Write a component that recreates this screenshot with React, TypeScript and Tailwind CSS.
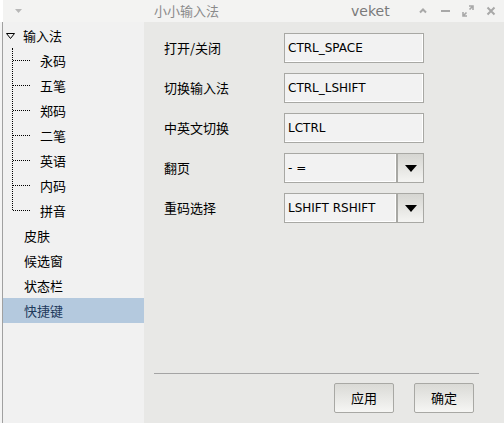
const cjk = { fontFamily: '"Noto Sans CJK SC", "DejaVu Sans", sans-serif' };

type Node = { label: string; child?: boolean; selected?: boolean };

const tree: Node[] = [
  { label: '输入法' },
  { label: '永码', child: true },
  { label: '五笔', child: true },
  { label: '郑码', child: true },
  { label: '二笔', child: true },
  { label: '英语', child: true },
  { label: '内码', child: true },
  { label: '拼音', child: true },
  { label: '皮肤' },
  { label: '候选窗' },
  { label: '状态栏' },
  { label: '快捷键', selected: true },
];

function TextBox({ value }: { value: string }) {
  return (
    <div className="w-[140px] h-[30px] border border-[#a8a8a4] bg-[#f2f2f2] shadow-[inset_-1px_-1px_0_#ffffff] flex items-center pl-[3px] text-[12px] text-black font-['DejaVu_Sans']">
      {value}
    </div>
  );
}

function Combo({ value }: { value: string }) {
  return (
    <div className="flex w-[140px] h-[30px]">
      <div className="w-[113px] h-full border border-[#a8a8a4] bg-[#f2f2f2] shadow-[inset_-1px_-1px_0_#ffffff] flex items-center pl-[3px] text-[12px] text-black font-['DejaVu_Sans']">
        {value}
      </div>
      <div className="w-[27px] h-full border border-[#a8a8a4] bg-gradient-to-b from-[#d6d6d2] to-[#f4f4f2] flex items-center justify-center">
        <svg width="12" height="7" viewBox="0 0 12 7">
          <polygon points="0,0 12,0 6,7" fill="#000" />
        </svg>
      </div>
    </div>
  );
}

function Btn({ label }: { label: string }) {
  return (
    <button
      className="w-[60px] h-[30px] border border-[#a8a8a4] rounded-[2px] bg-gradient-to-b from-[#dadad6] to-[#f6f6f4] text-[13px] text-black"
      style={cjk}
    >
      {label}
    </button>
  );
}

export default function App() {
  const fields = [
    { label: '打开/关闭', value: 'CTRL_SPACE' },
    { label: '切换输入法', value: 'CTRL_LSHIFT' },
    { label: '中英文切换', value: 'LCTRL' },
  ];
  const combos = [
    { label: '翻页', value: '- =' },
    { label: '重码选择', value: 'LSHIFT RSHIFT' },
  ];

  return (
    <div className="w-[504px] h-[423px] flex bg-[#e8e8e6] overflow-hidden" style={cjk}>
      {/* desktop strip on the left edge */}
      <div className="w-[3px] h-full flex flex-col">
        <div className="h-[22px] bg-white" />
        <div className="flex-1 bg-[#f4f4f4] border-r border-[#a0a0a0]" />
      </div>

      <div className="flex-1 flex flex-col">
        {/* title bar */}
        <div className="h-[22px] flex items-center bg-[#f3f3f2] text-[#8a8a8a] relative">
          <svg className="ml-[12px]" width="7" height="4" viewBox="0 0 7 4">
            <polygon points="0,0 7,0 3.5,4" fill="#b8b8b8" />
          </svg>
          <span className="ml-[132px] text-[13px]">小小输入法</span>
          <span className="ml-[132px] text-[14px] font-['DejaVu_Sans'] text-[#7a7a7a]">veket</span>
          <div className="ml-auto mr-[8px] flex items-center gap-[12px]">
            <svg width="10" height="10" viewBox="0 0 10 10">
              <path d="M2 6.5 L5 3.5 L8 6.5" stroke="#a8a8a8" strokeWidth="2" fill="none" />
            </svg>
            <svg width="10" height="10" viewBox="0 0 10 10">
              <rect x="1" y="4" width="9" height="2" fill="#a8a8a8" />
            </svg>
            <svg width="12" height="12" viewBox="0 0 12 12">
              <path d="M7 1 H11 V5 M11 1 L7.5 4.5 M5 11 H1 V7 M1 11 L4.5 7.5" stroke="#a8a8a8" strokeWidth="1.6" fill="none" />
            </svg>
            <svg width="10" height="10" viewBox="0 0 10 10">
              <path d="M1.5 1.5 L8.5 8.5 M8.5 1.5 L1.5 8.5" stroke="#a8a8a8" strokeWidth="2" />
            </svg>
          </div>
        </div>

        <div className="flex-1 flex">
          {/* tree sidebar */}
          <div className="w-[141px] h-full bg-[#f1f1f1] pt-[1px] relative">
            <div className="absolute left-[9px] top-[26px] h-[162px] border-l border-dotted border-[#000]" />
            {tree.map((n, i) => (
              <div
                key={n.label}
                className={`h-[25px] flex items-center text-[13px] ${n.selected ? 'bg-[#b4c9de] text-[#1e3a5c]' : 'text-black'}`}
              >
                {i === 0 && (
                  <svg className="ml-[3px] mr-[8px]" width="9" height="6" viewBox="0 0 9 6">
                    <polygon points="0.5,0.5 8.5,0.5 4.5,5.5" fill="none" stroke="#000" />
                  </svg>
                )}
                {n.child && (
                  <div className="ml-[10px] w-[17px] mr-[10px] border-t border-dotted border-[#000]" />
                )}
                {!n.child && i !== 0 && <div className="w-[21px]" />}
                <span>{n.label}</span>
              </div>
            ))}
          </div>

          {/* settings panel */}
          <div className="flex-1 flex flex-col pl-[20px] pr-[25px] pt-[11px] pb-[10px]">
            <div className="flex flex-col gap-[10px]">
              {fields.map((f) => (
                <div key={f.label} className="flex items-center">
                  <span className="w-[120px] text-[13px] text-black">{f.label}</span>
                  <TextBox value={f.value} />
                </div>
              ))}
              {combos.map((c) => (
                <div key={c.label} className="flex items-center">
                  <span className="w-[120px] text-[13px] text-black">{c.label}</span>
                  <Combo value={c.value} />
                </div>
              ))}
            </div>
            <div className="mt-auto ml-[-10px] border-t border-[#a4a4a4]" />
            <div className="flex justify-end gap-[20px] mt-[9px] pr-[5px]">
              <Btn label="应用" />
              <Btn label="确定" />
            </div>
          </div>
        </div>
      </div>
    </div>
  );
}
